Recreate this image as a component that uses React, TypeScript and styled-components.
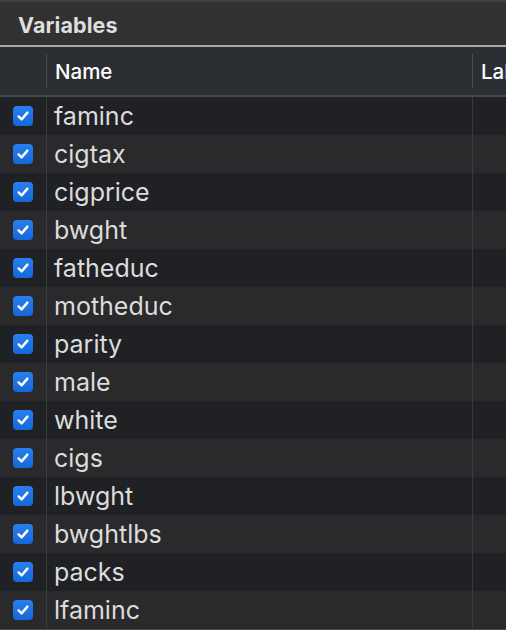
import React from "react";
import styled, { createGlobalStyle } from "styled-components";

const Global = createGlobalStyle`
  html, body { margin: 0; padding: 0; background: #222326; overflow: hidden; }
  body { font-family: Inter, "Noto Sans", "Liberation Sans", sans-serif; }
`;

const Panel = styled.div`
  width: 506px;
  height: 630px;
  display: flex;
  flex-direction: column;
  overflow: hidden;
  border-top: 2px solid #404042;
  background: #222326;
`;

const TitleBar = styled.div`
  height: 45px;
  display: flex;
  align-items: center;
  padding-left: 18px;
  padding-top: 2px;
  box-sizing: border-box;
  background: #313131;
  border-bottom: 2px solid #a8a8a8;
  flex-shrink: 0;
`;

const Title = styled.span`
  color: #dedede;
  font-size: 21.5px;
  font-weight: 700;
  letter-spacing: 0.1px;
`;

const columns = "46px 426px 1fr";

const HeaderRow = styled.div`
  display: grid;
  grid-template-columns: ${columns};
  height: 48px;
  background: #2b2e32;
  border-bottom: 2px solid #47484b;
  flex-shrink: 0;
`;

const HeaderCell = styled.div<{ $sep?: boolean }>`
  position: relative;
  display: flex;
  align-items: center;
  padding-left: 9px;
  color: #ffffff;
  font-size: 20.5px;
  font-weight: 500;
  white-space: nowrap;
  overflow: hidden;
  &::before {
    content: "";
    display: ${(p) => (p.$sep ? "block" : "none")};
    position: absolute;
    left: 0;
    top: 7px;
    bottom: 7px;
    width: 1px;
    background: #4a4c50;
  }
`;

const Row = styled.div<{ $odd: boolean }>`
  display: grid;
  grid-template-columns: ${columns};
  height: 38px;
  flex-shrink: 0;
  background: ${(p) => (p.$odd ? "#202124" : "#2a2a2c")};
`;

const CheckCell = styled.div`
  display: flex;
  align-items: center;
  padding-left: 13px;
`;

const NameCell = styled.div`
  display: flex;
  align-items: center;
  padding-left: 7px;
  border-left: 1px solid #3a3b3e;
  color: #dcdcdc;
  font-size: 25px;
  font-weight: 400;
`;

const EmptyCell = styled.div`
  border-left: 1.5px solid #3a3b3e;
`;

const Box = styled.span`
  width: 20px;
  height: 20px;
  border-radius: 4px;
  background: linear-gradient(#2a7ff0, #1468db);
  display: flex;
  align-items: center;
  justify-content: center;
`;

const Footer = styled.div`
  flex: 1;
  border-top: 2px solid #4a4a4c;
`;

const Check = () => (
  <Box>
    <svg width="14" height="14" viewBox="0 0 14 14">
      <path
        d="M2.6 7.4 L5.6 10.4 L11.4 3.6"
        fill="none"
        stroke="#ffffff"
        strokeWidth="2.4"
        strokeLinecap="round"
        strokeLinejoin="round"
      />
    </svg>
  </Box>
);

const vars = [
  "faminc",
  "cigtax",
  "cigprice",
  "bwght",
  "fatheduc",
  "motheduc",
  "parity",
  "male",
  "white",
  "cigs",
  "lbwght",
  "bwghtlbs",
  "packs",
  "lfaminc",
];

export default function App() {
  return (
    <>
      <Global />
      <Panel>
        <TitleBar>
          <Title>Variables</Title>
        </TitleBar>
        <HeaderRow>
          <HeaderCell />
          <HeaderCell $sep>Name</HeaderCell>
          <HeaderCell $sep>Label</HeaderCell>
        </HeaderRow>
        {vars.map((v, i) => (
          <Row key={v} $odd={i % 2 === 0}>
            <CheckCell>
              <Check />
            </CheckCell>
            <NameCell>{v}</NameCell>
            <EmptyCell />
          </Row>
        ))}
        <Footer />
      </Panel>
    </>
  );
}
